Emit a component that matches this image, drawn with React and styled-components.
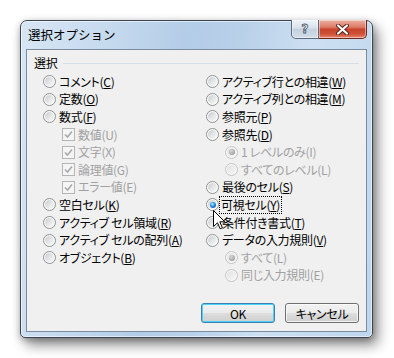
import React from 'react';
import styled, { createGlobalStyle } from 'styled-components';

const GlobalStyle = createGlobalStyle`
  html, body {
    margin: 0;
    padding: 0;
    background: #fff;
  }
  body {
    width: 394px;
    height: 358px;
    overflow: hidden;
    font-family: "Noto Sans CJK JP", "Noto Sans", sans-serif;
  }
`;

const Page = styled.div`
  padding: 20px 0 0 20px;
`;

const Window = styled.div`
  position: relative;
  box-sizing: border-box;
  width: 353px;
  height: 318px;
  display: flex;
  flex-direction: column;
  border: 1px solid #3b4652;
  border-radius: 7px 7px 5px 5px;
  background: linear-gradient(100deg, #d7e6f5 0%, #c6daee 22%, #b3cce7 42%, #b9d0e9 55%, #cde0f2 72%, #bed5ec 100%);
  box-shadow: inset 0 0 0 1px rgba(255, 255, 255, 0.55), 5px 7px 13px rgba(0, 0, 0, 0.45),
    0 2px 6px rgba(0, 0, 0, 0.25);
`;

const TitleBar = styled.div`
  height: 28px;
  display: flex;
  align-items: flex-start;
  flex: none;
`;

const Title = styled.div`
  margin: 6px 0 0 7px;
  font-size: 12.5px;
  line-height: 15px;
  color: #000;
`;

const Caption = styled.div`
  margin: -1px 5px 0 auto;
  display: flex;
  height: 19px;
`;

const CapButton = styled.div`
  box-sizing: border-box;
  height: 19px;
  width: ${(p) => (p.$close ? '48px' : '28px')};
  display: flex;
  align-items: center;
  justify-content: center;
  border: 1px solid ${(p) => (p.$close ? '#6e2a1f' : '#5b6b7d')};
  border-top: none;
  border-left-width: ${(p) => (p.$close ? '0' : '1px')};
  border-radius: ${(p) => (p.$close ? '0 0 5px 0' : '0 0 0 5px')};
  background: ${(p) =>
    p.$close
      ? 'linear-gradient(180deg, #eab0a3 0%, #dc7a64 40%, #c7432a 52%, #cf5238 78%, #e6876d 100%)'
      : 'linear-gradient(180deg, #eef3f8 0%, #d8e2ec 45%, #c3d1df 52%, #d3dee9 100%)'};
  box-shadow: inset 0 0 0 1px rgba(255, 255, 255, 0.45);
`;

const HelpGlyph = styled.span`
  font-family: "DejaVu Sans", sans-serif;
  font-weight: bold;
  font-size: 12px;
  line-height: 13px;
  color: #f4f6f8;
  -webkit-text-stroke: 0.8px #4b5868;
`;

const Client = styled.div`
  flex: 1;
  box-sizing: border-box;
  margin: 0 5px 5px;
  border: 1px solid #7a8ca0;
  background: #f0f0f0;
  padding: 6px 7px 0;
  display: flex;
  flex-direction: column;
  font-size: 12px;
  letter-spacing: -0.3px;
  color: #000;
  font-feature-settings: "palt";
`;

const SectionHead = styled.div`
  height: 14px;
  display: flex;
  align-items: center;
  gap: 6px;
  line-height: 14px;
`;

const HeadLine = styled.div`
  flex: 1;
  height: 1px;
  background: #d5dfe7;
`;

const Options = styled.div`
  display: grid;
  grid-template-columns: 163px 1fr;
  margin-top: 3px;
  padding-left: 9px;
`;

const Column = styled.div`
  display: flex;
  flex-direction: column;
`;

const Row = styled.div`
  height: 17.6px;
  display: flex;
  align-items: center;
  gap: 3px;
  padding-left: ${(p) => (p.$indent ? '19px' : '0')};
  white-space: nowrap;
`;

const Radio = styled.span`
  position: relative;
  box-sizing: border-box;
  flex: none;
  width: 13px;
  height: 13px;
  border-radius: 50%;
  border: 1px solid ${(p) => (p.$disabled ? '#c4c4c4' : '#8d8f91')};
  background: ${(p) => (p.$disabled ? '#f7f7f7' : '#fdfdfd')};
  &::after {
    content: '';
    position: absolute;
    inset: 1px;
    border-radius: 50%;
    background: ${(p) =>
      p.$disabled
        ? 'linear-gradient(135deg, #e2e2e2, #f6f6f6)'
        : 'linear-gradient(135deg, #c9cbcd 0%, #e6e7e8 55%, #fafafa 100%)'};
  }
  &::before {
    content: '';
    display: ${(p) => (p.$checked ? 'block' : 'none')};
    position: absolute;
    z-index: 1;
    inset: 2.5px;
    border-radius: 50%;
    background: ${(p) =>
      p.$disabled
        ? 'radial-gradient(circle at 40% 35%, #d8d8d8 0%, #a9a9a9 60%, #8e8e8e 100%)'
        : 'radial-gradient(circle at 40% 35%, #c9ecff 0%, #3aa0ec 35%, #0f5aa8 80%, #0a3f7c 100%)'};
  }
`;

const Check = styled.span`
  box-sizing: border-box;
  flex: none;
  width: 13px;
  height: 13px;
  border: 1px solid #b5b5b5;
  background: #f5f5f5;
  display: flex;
  align-items: center;
  justify-content: center;
`;

const Label = styled.span`
  line-height: 14px;
  color: ${(p) => (p.$disabled ? '#a1a1a1' : '#000')};
  outline: ${(p) => (p.$focus ? '1px dotted #000' : 'none')};
  outline-offset: 0;
  padding: ${(p) => (p.$focus ? '1px 1px' : '0')};
  margin-left: ${(p) => (p.$focus ? '-2px' : '0')};
  u {
    text-underline-offset: 1px;
  }
`;

const ButtonRow = styled.div`
  margin-top: 19px;
  display: flex;
  justify-content: flex-end;
  gap: 10px;
`;

const Button = styled.div`
  box-sizing: border-box;
  width: 74px;
  height: 20px;
  display: flex;
  align-items: center;
  justify-content: center;
  border-radius: 3px;
  border: 1px solid ${(p) => (p.$default ? '#3c7fb1' : '#707070')};
  background: linear-gradient(180deg, #f2f2f2 0%, #ebebeb 48%, #dddddd 52%, #cfcfcf 100%);
  box-shadow: inset 0 0 0 1px ${(p) => (p.$default ? '#48d3fa' : 'rgba(255,255,255,0.7)')};
  font-size: 12px;
`;

const Cursor = styled.svg`
  position: absolute;
  left: 192px;
  top: 189px;
  z-index: 5;
`;

const left = [
  { label: 'コメント(', k: 'C' },
  { label: '定数(', k: 'O' },
  { label: '数式(', k: 'F' },
  { label: '数値(U)', check: true, indent: true, disabled: true },
  { label: '文字(X)', check: true, indent: true, disabled: true },
  { label: '論理値(G)', check: true, indent: true, disabled: true },
  { label: 'エラー値(E)', check: true, indent: true, disabled: true },
  { label: '空白セル(', k: 'K' },
  { label: 'アクティブ セル領域(', k: 'R' },
  { label: 'アクティブ セルの配列(', k: 'A' },
  { label: 'オブジェクト(', k: 'B' },
];

const right = [
  { label: 'アクティブ行との相違(', k: 'W' },
  { label: 'アクティブ列との相違(', k: 'M' },
  { label: '参照元(', k: 'P' },
  { label: '参照先(', k: 'D' },
  { label: '1 レベルのみ(I)', indent: true, disabled: true, checked: true },
  { label: 'すべてのレベル(L)', indent: true, disabled: true },
  { label: '最後のセル(', k: 'S' },
  { label: '可視セル(', k: 'Y', checked: true, focus: true },
  { label: '条件付き書式(', k: 'T' },
  { label: 'データの入力規則(', k: 'V' },
  { label: 'すべて(L)', indent: true, disabled: true, checked: true },
  { label: '同じ入力規則(E)', indent: true, disabled: true },
];

const CheckMark = () => (
  <svg width="9" height="9" viewBox="0 0 9 9">
    <path d="M1 4.5 L3.5 7 L8 1.5" fill="none" stroke="#a9a9a9" strokeWidth="1.6" />
  </svg>
);

const Option = ({ o }) => (
  <Row $indent={o.indent}>
    {o.check ? (
      <Check>
        <CheckMark />
      </Check>
    ) : (
      <Radio $disabled={o.disabled} $checked={o.checked} />
    )}
    <Label $disabled={o.disabled} $focus={o.focus}>
      {o.label}
      {o.k && (
        <>
          <u>{o.k}</u>)
        </>
      )}
    </Label>
  </Row>
);

export default function App() {
  return (
    <>
      <GlobalStyle />
      <Page>
        <Window>
          <TitleBar>
            <Title>選択オプション</Title>
            <Caption>
              <CapButton>
                <HelpGlyph>?</HelpGlyph>
              </CapButton>
              <CapButton $close>
                <svg width="13" height="11" viewBox="0 0 13 11">
                  <path d="M2 1.5 L11 9.5 M11 1.5 L2 9.5" stroke="#5a2018" strokeWidth="4" strokeLinecap="round" />
                  <path d="M2 1.5 L11 9.5 M11 1.5 L2 9.5" stroke="#ffffff" strokeWidth="2.2" strokeLinecap="round" />
                </svg>
              </CapButton>
            </Caption>
          </TitleBar>
          <Client>
            <SectionHead>
              選択
              <HeadLine />
            </SectionHead>
            <Options>
              <Column>
                {left.map((o) => (
                  <Option key={o.label} o={o} />
                ))}
              </Column>
              <Column>
                {right.map((o) => (
                  <Option key={o.label} o={o} />
                ))}
              </Column>
            </Options>
            <ButtonRow>
              <Button $default>OK</Button>
              <Button>キャンセル</Button>
            </ButtonRow>
          </Client>
          <Cursor width="13" height="20" viewBox="0 0 13 20">
            <path
              d="M0.5 0.5 L0.5 16.5 L4.5 12.8 L7.2 18.8 L9.4 17.8 L6.8 11.8 L11.8 11.8 Z"
              fill="#fff"
              stroke="#000"
              strokeWidth="1"
              strokeLinejoin="miter"
            />
          </Cursor>
        </Window>
      </Page>
    </>
  );
}
